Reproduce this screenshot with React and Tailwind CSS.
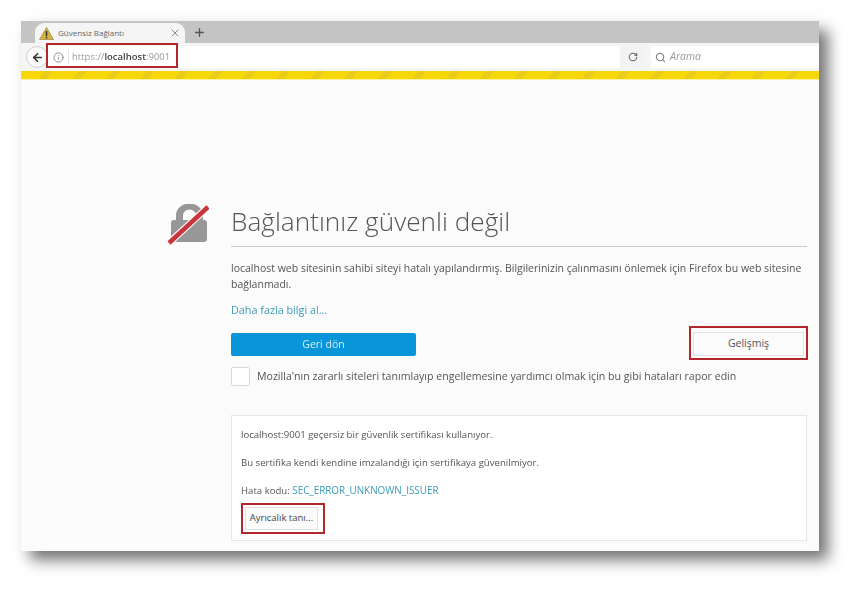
import { ArrowLeft, Info, Plus, RotateCw, Search, X } from 'lucide-react';

const font = { fontFamily: '"Open Sans", "Noto Sans", sans-serif' };

function LockIcon() {
  return (
    <svg width="42" height="42" viewBox="0 0 42 42" className="shrink-0">
      <path d="M9 18v-7a13 11 0 0 1 27 0v7h-7v-7a6 5 0 0 0-13 0v7z" fill="#979797" />
      <rect x="4" y="16" width="36" height="22" rx="3" fill="#979797" />
      <path d="M41 3 2 39" stroke="#fbfbfb" strokeWidth="7" />
      <path d="M41 3 2 39" stroke="#c8353a" strokeWidth="4.5" />
    </svg>
  );
}

function WarningIcon() {
  return (
    <svg width="15" height="13" viewBox="0 0 15 13" className="shrink-0">
      <path d="M7.5 0.5 14.5 12.5H0.5z" fill="#d9b23c" stroke="#8a7a3a" strokeWidth="0.6" />
      <rect x="6.7" y="4" width="1.6" height="5" fill="#3a3a3a" />
      <rect x="6.7" y="9.8" width="1.6" height="1.6" fill="#3a3a3a" />
    </svg>
  );
}

export default function App() {
  return (
    <div className="w-[861px] h-[593px] bg-white pt-[21px] pl-[21px] overflow-hidden" style={font}>
      <div className="w-[798px] h-[530px] bg-[#fbfbfb] flex flex-col shadow-[9px_9px_14px_rgba(0,0,0,0.55)] overflow-hidden blur-[0.5px]">
        {/* Tab strip */}
        <div className="h-[22px] bg-[#c4c4c4] flex items-end pl-[14px] shrink-0">
          <div className="w-[150px] h-[20px] bg-[#f5f5f5] rounded-t-[9px] flex items-center pl-[4px] pr-[4px] gap-[4px]">
            <WarningIcon />
            <span className="text-[8px] text-[#666] flex-1">Güvensiz Bağlantı</span>
            <X size={12} strokeWidth={1.5} className="text-[#666]" />
          </div>
          <Plus size={13} strokeWidth={2.5} className="text-[#555] ml-[8px] mb-[4px]" />
        </div>

        {/* Toolbar */}
        <div className="h-[28px] bg-[#f5f5f5] flex items-center shrink-0 pl-[5px]">
          <div className="w-[22px] h-[22px] rounded-full border border-[#d0d0d0] bg-[#fafafa] flex items-center justify-center shrink-0">
            <ArrowLeft size={13} strokeWidth={3} className="text-[#333]" />
          </div>
          <div className="flex-1 h-[22px] bg-white flex items-center">
            <div className="relative flex items-center h-[22px] pl-[5px] text-[9.5px] text-[#999]">
              <Info size={11} className="text-[#888] mr-[4px]" />
              <span className="border-l border-[#e4e4e4] pl-[3px]">
                https://<b className="text-[#444] font-semibold">localhost</b>:9001
              </span>
              <div className="absolute left-[-2px] top-[-3px] w-[132px] h-[25px] border-[2px] border-[#b3262c]" />
            </div>
          </div>
          <div className="w-[25px] h-[22px] bg-[#f3f3f3] flex items-center justify-center shrink-0">
            <RotateCw size={10} strokeWidth={2.5} className="text-[#666]" />
          </div>
          <div className="w-[168px] h-[22px] ml-[6px] bg-white flex items-center pl-[4px] gap-[4px] shrink-0">
            <Search size={11} strokeWidth={2.5} className="text-[#888]" />
            <span className="text-[10.5px] italic text-[#999]">Arama</span>
          </div>
        </div>

        {/* Warning stripe */}
        <div className="h-[9px] shrink-0 border-b border-[#fff3a0] bg-[repeating-linear-gradient(-50deg,#f7d708_0_20px,#e9cc1c_20px_26px)]" />

        {/* Page */}
        <div className="flex-1 pl-[146px] pr-[12px] pt-[123px] flex">
          <div className="w-[42px] pt-[1px] mr-[22px] shrink-0">
            <LockIcon />
          </div>
          <div className="flex-1 min-w-0">
            <h1 className="text-[26.2px] leading-[36px] text-[#555] font-light border-b border-[#c9c9c9] h-[44px]">
              Bağlantınız güvenli değil
            </h1>
            <p className="mt-[13px] text-[10.5px] leading-[16px] text-[#555]">
              localhost web sitesinin sahibi siteyi hatalı yapılandırmış. Bilgilerinizin çalınmasını önlemek için Firefox bu web sitesine bağlanmadı.
            </p>
            <p className="mt-[10px] text-[10.8px] leading-[16px] text-[#3b9ab8]">Daha fazla bilgi al...</p>

            <div className="flex items-start justify-between mt-[12px] h-[27px]">
              <button className="mt-[3px] w-[185px] h-[23px] bg-[#0996d8] rounded-[2px] text-[10.5px] text-[#d5effa]">Geri dön</button>
              <div className="relative mt-[2px] mr-[3px]">
                <button className="block w-[111px] h-[24px] bg-[#fbfbfb] border border-[#e2e2e2] text-[10.5px] text-[#555]">Gelişmiş</button>
                <div className="absolute -left-[4px] -top-[6px] w-[119px] h-[34px] border-[2px] border-[#b3262c]" />
              </div>
            </div>

            <div className="flex items-center mt-[10px] h-[19px]">
              <div className="w-[19px] h-[19px] bg-white border border-[#d8d8d8] rounded-[2px] shrink-0" />
              <span className="ml-[7px] text-[10.6px] text-[#555]">
                Mozilla'nın zararlı siteleri tanımlayıp engellemesine yardımcı olmak için bu gibi hataları rapor edin
              </span>
            </div>

            <div className="mt-[29px] h-[126px] bg-white border border-[#e6e6e6] pl-[9px] pt-[12px] text-[9.6px] text-[#555]">
              <p className="leading-[14px]">localhost:9001 geçersiz bir güvenlik sertifikası kullanıyor.</p>
              <p className="leading-[14px] mt-[14px]">Bu sertifika kendi kendine imzalandığı için sertifikaya güvenilmiyor.</p>
              <p className="leading-[14px] mt-[13px]">
                Hata kodu: <span className="text-[#3b9ab8] text-[9.9px]">SEC_ERROR_UNKNOWN_ISSUER</span>
              </p>
              <div className="relative mt-[9px] w-[72px]">
                <button className="block ml-[4px] w-[73px] h-[23px] bg-[#fbfbfb] border border-[#e2e2e2] text-[9.5px] text-[#444]">Ayrıcalık tanı...</button>
                <div className="absolute left-0 -top-[4px] w-[84px] h-[31px] border-[2px] border-[#b3262c]" />
              </div>
            </div>
          </div>
        </div>
      </div>
    </div>
  );
}
